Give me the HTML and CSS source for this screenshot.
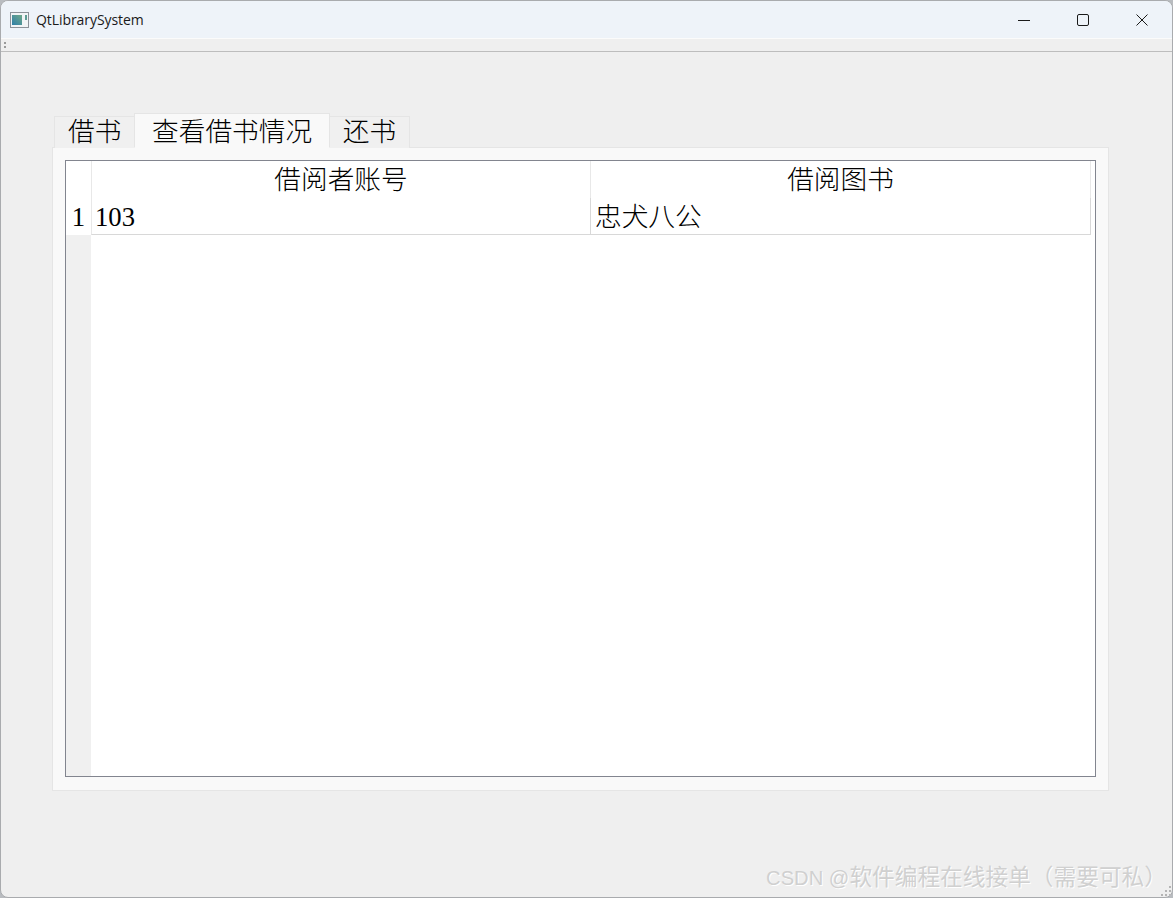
FILE: index.html
```html
<!DOCTYPE html>
<html lang="zh-CN">
<head>
<meta charset="utf-8">
<title>QtLibrarySystem</title>
<link rel="stylesheet" href="styles.css">
</head>
<body>
<div class="window">
  <header class="titlebar">
    <svg class="app-icon" width="19" height="16" viewBox="0 0 19 16">
      <defs>
        <linearGradient id="appfill" x1="0" y1="1" x2="1" y2="0">
          <stop offset="0" stop-color="#2f7fa8"/>
          <stop offset="1" stop-color="#6fa88a"/>
        </linearGradient>
      </defs>
      <rect x="0.5" y="0.5" width="18" height="15" fill="#f2f4f6" stroke="#8d9299"/>
      <rect x="2" y="3" width="10" height="10" fill="url(#appfill)"/>
      <rect x="15" y="3" width="2" height="5" fill="#5f9c94"/>
    </svg>
    <span class="app-title">QtLibrarySystem</span>
    <div class="win-buttons">
      <button class="win-btn"><svg width="12" height="12" viewBox="0 0 12 12"><path d="M0 6.5h12" stroke="#1a1a1a" fill="none"/></svg></button>
      <button class="win-btn"><svg width="12" height="12" viewBox="0 0 12 12"><rect x="0.5" y="0.5" width="11" height="11" rx="1.5" stroke="#1a1a1a" fill="none"/></svg></button>
      <button class="win-btn"><svg width="12" height="12" viewBox="0 0 12 12"><path d="M0.5 0.5l11 11M11.5 0.5l-11 11" stroke="#1a1a1a" fill="none"/></svg></button>
    </div>
  </header>
  <div class="toolbar"><span class="grip"></span></div>
  <main class="content">
    <div class="tabs">
      <div class="tab">借书</div>
      <div class="tab selected">查看借书情况</div>
      <div class="tab">还书</div>
    </div>
    <section class="pane">
      <div class="table">
        <div class="table-grid">
          <div class="corner"></div>
          <div class="col-head col-first">借阅者账号</div>
          <div class="col-head">借阅图书</div>
          <div class="row-head">1</div>
          <div class="cell col-first">103</div>
          <div class="cell">忠犬八公</div>
        </div>
        <div class="table-empty"><div class="row-gutter"></div></div>
      </div>
    </section>
  </main>
  <div class="watermark"><span class="watermark-latin">CSDN @</span>软件编程在线接单（需要可私）</div>
  <svg class="size-grip" width="11" height="11" viewBox="0 0 11 11" fill="#b4b4b4">
    <rect x="8" y="0" width="2" height="2"/><rect x="4" y="4" width="2" height="2"/><rect x="8" y="4" width="2" height="2"/><rect x="0" y="8" width="2" height="2"/><rect x="4" y="8" width="2" height="2"/><rect x="8" y="8" width="2" height="2"/>
  </svg>
</div>
</body>
</html>
```
FILE: styles.css
```css
* { box-sizing: border-box; }
html, body { margin: 0; height: 100%; background: #b9bcc0; overflow: hidden; }
.window {
  position: relative;
  width: 1173px;
  height: 898px;
  background: #efefef;
  border: 1px solid #a9abae;
  border-radius: 8px;
  overflow: hidden;
  display: flex;
  flex-direction: column;
  font-family: "Liberation Serif", "Noto Sans CJK SC", serif;
  font-weight: 300;
  color: #000;
}
.titlebar {
  height: 37px;
  flex: none;
  background: #eef3f9;
  display: flex;
  align-items: center;
  padding-left: 9px;
}
.app-icon { flex: none; margin-right: 7px; }
.app-title { font: 14px "Open Sans", "Liberation Sans", sans-serif; color: #1a1a1a; letter-spacing: -0.07px; }
.win-buttons { margin-left: auto; padding-right: 1px; display: flex; }
.win-btn {
  width: 59px;
  height: 37px;
  border: 0;
  padding: 0;
  background: transparent;
  display: flex;
  align-items: center;
  justify-content: center;
}
.toolbar {
  height: 14px;
  flex: none;
  border-top: 1px solid #fbfbfb;
  border-bottom: 1px solid #bdbdbd;
  background: #efefef;
  padding: 3px 0 0 3px;
}
.grip {
  display: block;
  width: 2px;
  height: 7px;
  background: repeating-linear-gradient(#9a9a9a 0 2px, transparent 2px 4px);
}
.content {
  flex: 1;
  padding: 61px 63px 0 51px;
}
.tabs {
  display: flex;
  align-items: flex-end;
  padding-left: 2px;
  margin-bottom: -1px;
  position: relative;
}
.tab {
  height: 32px;
  padding: 0 13px;
  font-size: 26.67px;
  line-height: 30px;
  background: #f0f0f0;
  border: 1px solid #e5e5e5;
  border-bottom: 0;
  margin-right: -1px;
}
.tab.selected {
  height: 35px;
  padding: 0 16.8px;
  line-height: 36px;
  background: #f9f9f9;
  border-bottom: 1px solid #f9f9f9;
  position: relative;
  z-index: 1;
}
.pane {
  height: 644px;
  background: #f9f9f9;
  border: 1px solid #e5e5e5;
  padding: 12px;
}
.table {
  height: 617px;
  width: 1031px;
  background: #fff;
  border: 1px solid #82858f;
  display: flex;
  flex-direction: column;
}
.table-grid {
  flex: none;
  display: grid;
  grid-template-columns: 25px 500px 500px;
  grid-template-rows: 37px 37px;
  font-size: 26.67px;
}
.corner, .row-head { background: #fff; }
.col-head { text-align: center; line-height: 39px; border-right: 1px solid #e8e8e8; }
.row-head { text-align: center; line-height: 38px; border-bottom: 1px solid #fff; }
.cell { padding-left: 4px; line-height: 38px; border-bottom: 1px solid #d8d8d8; border-right: 1px solid #d8d8d8; }
.col-first { border-left: 1px solid #e8e8e8; }
.cell.col-first { padding-left: 3px; }
.table-empty { flex: 1; display: flex; }
.row-gutter { width: 25px; background: #f0f0f0; }
.watermark {
  position: absolute;
  right: 5px;
  bottom: 5px;
  font: 22.7px "Liberation Sans", "Noto Sans CJK SC", sans-serif;
  color: #d0d0d0;
  text-shadow: 1px 1px 0 #fff;
  white-space: nowrap;
}
.watermark-latin { font-size: 20.2px; }
.size-grip { position: absolute; right: 0; bottom: 0; }
```
